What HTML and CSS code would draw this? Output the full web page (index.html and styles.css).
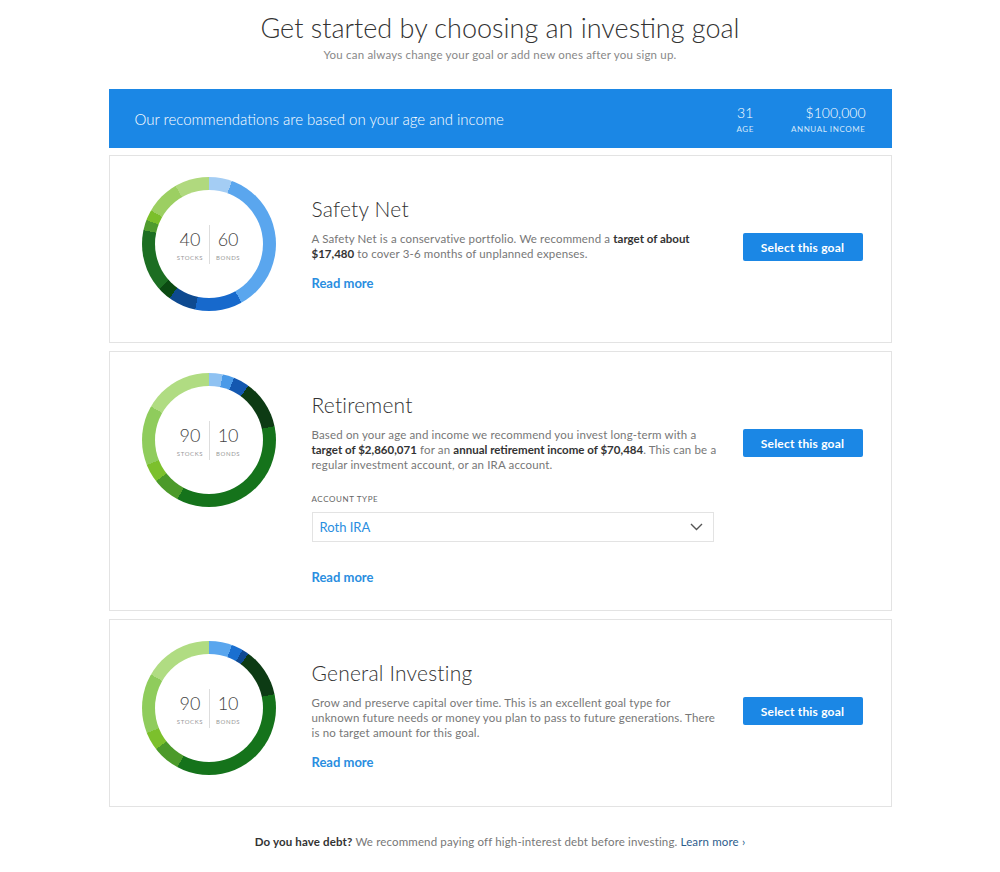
FILE: index.html
```html
<!DOCTYPE html>
<html lang="en">
<head>
    <meta charset="UTF-8">
    <meta name="viewport" content="width=device-width, initial-scale=1.0">
    <title>Choose a Goal</title>
    <link rel="stylesheet" href="styles.css">
</head>
<body>
    <div class="page">
        <div class="intro">
            <h1>Get started by choosing an investing goal</h1>
            <p>You can always change your goal or add new ones after you sign up.</p>
        </div>

        <div class="profile-bar">
            <span class="profile-text">Our recommendations are based on your age and income</span>
            <div class="profile-stats">
                <div class="stat stat-age">
                    <span class="stat-value">31</span>
                    <span class="stat-label">Age</span>
                </div>
                <div class="stat stat-income">
                    <span class="stat-value">$100,000</span>
                    <span class="stat-label">Annual Income</span>
                </div>
            </div>
        </div>

        <div class="goal">
            <div class="donut donut-safety">
                <div class="donut-inner">
                    <div class="split">
                        <span class="split-num">40</span>
                        <span class="split-label">Stocks</span>
                    </div>
                    <div class="split">
                        <span class="split-num">60</span>
                        <span class="split-label">Bonds</span>
                    </div>
                </div>
            </div>
            <div class="goal-body">
                <h2>Safety Net</h2>
                <p class="goal-desc">A Safety Net is a conservative portfolio. We recommend a <b>target of about $17,480</b> to cover 3-6 months of unplanned expenses.</p>
                <a class="read-more" href="#">Read more</a>
            </div>
            <div class="goal-action">
                <button type="button">Select this goal</button>
            </div>
        </div>

        <div class="goal">
            <div class="donut donut-retire">
                <div class="donut-inner">
                    <div class="split">
                        <span class="split-num">90</span>
                        <span class="split-label">Stocks</span>
                    </div>
                    <div class="split">
                        <span class="split-num">10</span>
                        <span class="split-label">Bonds</span>
                    </div>
                </div>
            </div>
            <div class="goal-body">
                <h2>Retirement</h2>
                <p class="goal-desc">Based on your age and income we recommend you invest long-term with a <b>target of $2,860,071</b> for an <b>annual retirement income of $70,484</b>. This can be a regular investment account, or an IRA account.</p>
                <div class="field">
                    <label>Account Type</label>
                    <div class="select">
                        <span>Roth IRA</span>
                        <svg width="13" height="8" viewBox="0 0 13 8"><path d="M1 1l5.5 5.5L12 1" fill="none" stroke="#555" stroke-width="1.4"/></svg>
                    </div>
                </div>
                <a class="read-more read-more-field" href="#">Read more</a>
            </div>
            <div class="goal-action">
                <button type="button">Select this goal</button>
            </div>
        </div>

        <div class="goal">
            <div class="donut donut-general">
                <div class="donut-inner">
                    <div class="split">
                        <span class="split-num">90</span>
                        <span class="split-label">Stocks</span>
                    </div>
                    <div class="split">
                        <span class="split-num">10</span>
                        <span class="split-label">Bonds</span>
                    </div>
                </div>
            </div>
            <div class="goal-body">
                <h2>General Investing</h2>
                <p class="goal-desc">Grow and preserve capital over time. This is an excellent goal type for unknown future needs or money you plan to pass to future generations. There is no target amount for this goal.</p>
                <a class="read-more" href="#">Read more</a>
            </div>
            <div class="goal-action">
                <button type="button">Select this goal</button>
            </div>
        </div>

        <p class="debt-note"><b>Do you have debt?</b> We recommend paying off high-interest debt before investing. <a href="#">Learn more ›</a></p>
    </div>
</body>
</html>
```

FILE: styles.css
```css
* {
    margin: 0;
    padding: 0;
    box-sizing: border-box;
}

body {
    font-family: "Lato", "Open Sans", sans-serif;
    background-color: #ffffff;
    color: #333333;
}

.page {
    width: 783px;
    margin: 0 auto;
    padding-top: 12px;
}

.intro {
    text-align: center;
}

.intro h1 {
    font-size: 27px;
    font-weight: 300;
    color: #333;
    line-height: 32px;
}

.intro p {
    font-size: 11.5px;
    letter-spacing: 0.2px;
    color: #888;
    margin-top: 4px;
    line-height: 14px;
}

.profile-bar {
    margin-top: 27px;
    height: 59px;
    background-color: #1b87e5;
    color: #fff;
    display: flex;
    align-items: center;
    justify-content: space-between;
    padding: 0 26px;
}

.profile-text {
    font-size: 15px;
    font-weight: 300;
}

.profile-stats {
    display: flex;
    gap: 37px;
}

.stat {
    display: flex;
    flex-direction: column;
    align-items: center;
}

.stat-income {
    align-items: flex-end;
}

.stat-value {
    font-size: 14px;
    line-height: 18px;
    font-weight: 300;
}

.stat-label {
    font-size: 8px;
    text-transform: uppercase;
    letter-spacing: 0.6px;
    margin-top: 2px;
    color: #d6e8fa;
}

/* goal cards: donut | copy | action */
.goal {
    margin-top: 7px;
    border: 1px solid #e3e3e3;
    display: grid;
    grid-template-columns: 134px 1fr 120px;
    align-items: start;
    padding: 21px 28px 24px 32px;
}

.goal + .goal {
    margin-top: 8px;
}

.donut {
    width: 134px;
    height: 134px;
    border-radius: 50%;
    padding: 13px;
    margin-bottom: 7px;
}

.donut-safety {
    background: conic-gradient(
        #a4cdf4 0deg 20deg,
        #5aa6ee 20deg 151deg,
        #1769cc 151deg 192deg,
        #0e4a90 192deg 216deg,
        #0b4a12 216deg 228deg,
        #1c6e22 228deg 282deg,
        #4f9b2e 282deg 291deg,
        #7bbf2b 291deg 300deg,
        #9ccf62 300deg 330deg,
        #b0d97e 330deg 360deg
    );
}

.donut-retire {
    background: conic-gradient(
        #8fc2f2 0deg 12deg,
        #4a9ae8 12deg 22deg,
        #1458b0 22deg 36deg,
        #0d3b14 36deg 78deg,
        #15731b 78deg 208deg,
        #4c9a2a 208deg 232deg,
        #7cc02c 232deg 248deg,
        #8fcc5c 248deg 300deg,
        #b0dc82 300deg 360deg
    );
}

.donut-general {
    background: conic-gradient(
        #5aa6ee 0deg 20deg,
        #1a6fd0 20deg 30deg,
        #0f4a92 30deg 36deg,
        #0d3b14 36deg 78deg,
        #15731b 78deg 208deg,
        #4c9a2a 208deg 232deg,
        #7cc02c 232deg 248deg,
        #8fcc5c 248deg 300deg,
        #b0dc82 300deg 360deg
    );
}

.donut-inner {
    width: 100%;
    height: 100%;
    border-radius: 50%;
    background: #fff;
    display: flex;
    align-items: center;
    justify-content: center;
}

.split {
    display: flex;
    flex-direction: column;
    align-items: center;
    padding: 3px 6px;
}

.split + .split {
    border-left: 1px solid #dddddd;
}

.split-num {
    font-size: 18px;
    font-weight: 300;
    color: #444;
    line-height: 22px;
}

.split-label {
    font-size: 6px;
    text-transform: uppercase;
    letter-spacing: 0.6px;
    color: #999;
    margin-top: 4px;
}

.goal-body {
    padding-top: 20px;
    margin: 0 22px 0 36px;
}

.goal-body h2 {
    font-size: 21px;
    font-weight: 300;
    letter-spacing: 0.2px;
    color: #333;
    line-height: 24px;
}

.goal-desc {
    margin-top: 10px;
    font-size: 11.5px;
    letter-spacing: 0.15px;
    line-height: 15px;
    color: #777;
}

.goal-desc b {
    color: #333;
    font-weight: 700;
    letter-spacing: 0;
}

.read-more {
    display: block;
    margin-top: 13px;
    font-size: 13px;
    line-height: 18px;
    font-weight: 700;
    color: #2a8ee0;
    text-decoration: none;
}

.read-more-field {
    margin-top: 26px;
}

.field {
    margin-top: 21px;
    width: 402px;
}

.field label {
    display: block;
    font-size: 8px;
    line-height: 12px;
    text-transform: uppercase;
    letter-spacing: 0.6px;
    color: #666;
}

.select {
    margin-top: 7px;
    height: 30px;
    border: 1px solid #e3e3e3;
    display: flex;
    align-items: center;
    justify-content: space-between;
    padding: 0 10px 0 7px;
    font-size: 13px;
    color: #2a8ee0;
}

.goal-action {
    padding-top: 56px;
}

.goal-action button {
    width: 120px;
    height: 28px;
    border: none;
    border-radius: 2px;
    background-color: #1b87e5;
    color: #fff;
    font-family: inherit;
    font-size: 12px;
    letter-spacing: 0.2px;
    font-weight: 700;
    cursor: pointer;
}

.debt-note {
    text-align: center;
    font-size: 11.5px;
    letter-spacing: 0.15px;
    color: #777;
    margin-top: 28px;
}

.debt-note b {
    color: #333;
}

.debt-note a {
    color: #2d5d8c;
    text-decoration: none;
}
```
